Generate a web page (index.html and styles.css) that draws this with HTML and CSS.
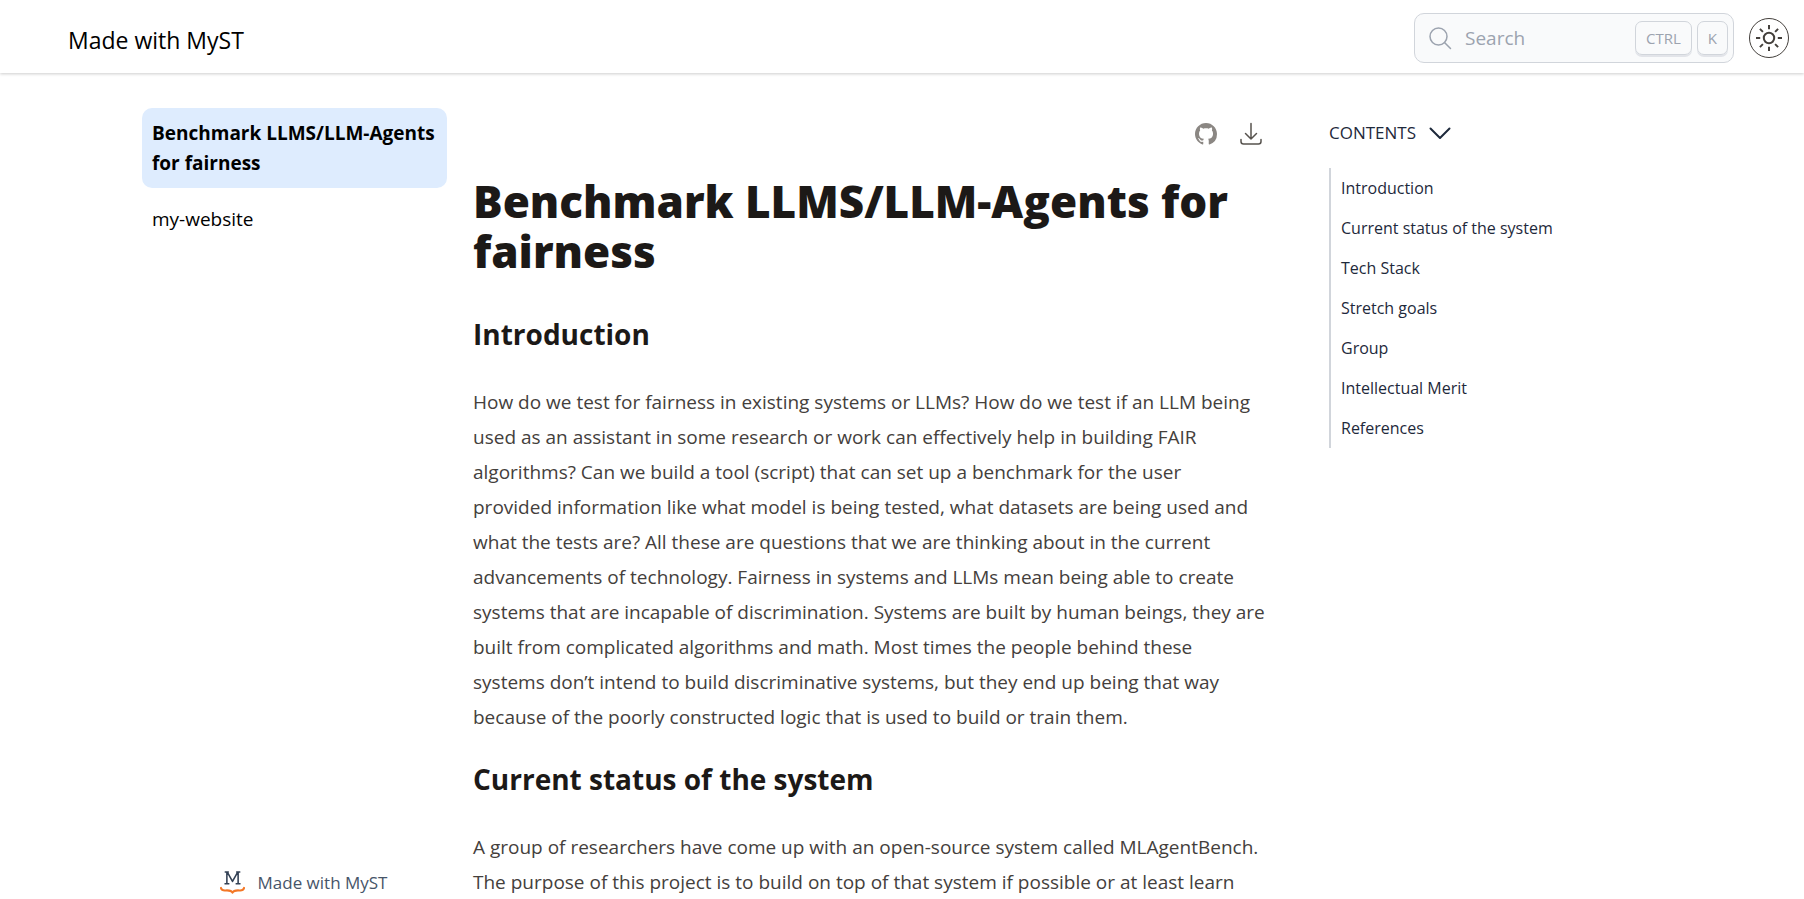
FILE: index.html
```html
<!DOCTYPE html>
<html lang="en">
<head>
<meta charset="utf-8">
<meta name="viewport" content="width=device-width, initial-scale=1">
<title>Benchmark LLMS/LLM-Agents for fairness - Made with MyST</title>
<link rel="stylesheet" href="styles.css">
</head>
<body>
<header class="topbar">
  <a class="site-title" href="#">Made with MyST</a>
  <div class="topbar-actions">
    <button class="search" type="button">
      <svg class="search-icon" viewBox="0 0 24 24" aria-hidden="true"><circle cx="9.500" cy="10.500" r="8.500"/><path d="M15.500 16.500 21.500 22.500"/></svg>
      <span class="search-label">Search</span>
      <kbd class="key">CTRL</kbd>
      <kbd class="key">K</kbd>
    </button>
    <button class="theme-toggle" type="button" aria-label="Toggle theme">
      <svg class="theme-icon" viewBox="0 0 28 28" aria-hidden="true"><circle cx="14" cy="14" r="5.200"/><path d="M14 1v4.200M14 22.800V27M1 14h4.200M22.800 14H27M4.900 4.900l3 3M20.100 20.100l3 3M4.900 23.100l3-3M20.100 7.900l3-3"/></svg>
    </button>
  </div>
</header>
<div class="layout">
  <aside class="sidebar">
    <nav class="site-nav" aria-label="Site">
      <a class="nav-link nav-link-active" href="#" aria-current="page">Benchmark LLMS/LLM-Agents for fairness</a>
      <a class="nav-link" href="#">my-website</a>
    </nav>
    <a class="made-with" href="#">
      <svg class="myst-logo" viewBox="0 0 24 24" aria-hidden="true">
        <path class="logo-letter" d="M4.500 2h4M15.500 2h4M6.600 2v11M17.400 2v11M4.300 13.200h4.700M15 13.200h4.700M7 2l5 9 5-9"/>
        <path class="logo-brace" d="M.9 17.200c.5 2.200 2 2.600 4.500 2.400 3-.2 5.600-.2 6.600 2.200 1-2.400 3.600-2.400 6.600-2.200 2.500.2 4-.2 4.500-2.400"/>
      </svg>
      <span>Made with MyST</span>
    </a>
  </aside>
  <main class="article">
    <div class="article-tools">
      <a class="tool" href="#" aria-label="GitHub repository">
        <svg class="github-icon" viewBox="0 0 16 16" aria-hidden="true"><path d="M8 0C3.580 0 0 3.580 0 8c0 3.540 2.290 6.530 5.470 7.590.4.070.55-.17.55-.38 0-.19-.01-.82-.01-1.490-2.010.37-2.530-.49-2.690-.94-.09-.23-.48-.94-.82-1.130-.28-.15-.68-.52-.01-.53.63-.01 1.080.58 1.230.82.72 1.210 1.870.87 2.330.66.07-.52.28-.87.51-1.070-1.780-.2-3.640-.89-3.640-3.950 0-.87.31-1.590.82-2.150-.08-.2-.36-1.020.08-2.120 0 0 .67-.21 2.200.82.64-.18 1.320-.27 2-.27s1.360.09 2 .27c1.530-1.040 2.200-.82 2.200-.82.44 1.100.16 1.920.08 2.120.51.56.82 1.270.82 2.150 0 3.070-1.870 3.750-3.650 3.950.29.25.54.73.54 1.480 0 1.070-.01 1.930-.01 2.200 0 .21.15.46.55.38A8.010 8.010 0 0 0 16 8c0-4.420-3.580-8-8-8z"/></svg>
      </a>
      <button class="tool" type="button" aria-label="Downloads">
        <svg class="download-icon" viewBox="0 0 24 24" aria-hidden="true"><path d="M12 1.500V17M6.500 11.500 12 17l5.500-5.500M2 17.500v2q0 2.500 2.500 2.500h15q2.500 0 2.500-2.500v-2"/></svg>
      </button>
    </div>
    <h1 class="page-title">Benchmark LLMS/LLM-Agents for fairness</h1>
    <h2 class="section-title" id="introduction">Introduction</h2>
    <p class="prose">How do we test for fairness in existing systems or LLMs? How do we test if an LLM being used as an assistant in some research or work can effectively help in building FAIR algorithms? Can we build a tool (script) that can set up a benchmark for the user<br> provided information like what model is being tested, what datasets are being used and what the tests are? All these are questions that we are thinking about in the current advancements of technology. Fairness in systems and LLMs mean being able to create systems that are incapable of discrimination. Systems are built by human beings, they are built from complicated algorithms and math. Most times the people behind these systems don’t intend to build discriminative systems, but they end up being that way because of the poorly constructed logic that is used to build or train them.</p>
    <h2 class="section-title" id="status">Current status of the system</h2>
    <p class="prose">A group of researchers have come up with an open-source system called MLAgentBench. The purpose of this project is to build on top of that system if possible or at least learn</p>
  </main>
  <nav class="contents" aria-label="Contents">
    <button class="contents-toggle" type="button" aria-expanded="true">
      <span>CONTENTS</span>
      <svg class="chevron" viewBox="0 0 24 24" aria-hidden="true"><path d="M2.500 7.500 12 17l9.500-9.500"/></svg>
    </button>
    <ul class="contents-list">
      <li><a class="contents-link" href="#introduction">Introduction</a></li>
      <li><a class="contents-link" href="#status">Current status of the system</a></li>
      <li><a class="contents-link" href="#">Tech Stack</a></li>
      <li><a class="contents-link" href="#">Stretch goals</a></li>
      <li><a class="contents-link" href="#">Group</a></li>
      <li><a class="contents-link" href="#">Intellectual Merit</a></li>
      <li><a class="contents-link" href="#">References</a></li>
    </ul>
  </nav>
</div>
</body>
</html>
```

FILE: styles.css
```css
* {
  box-sizing: border-box;
}

body {
  margin: 0;
  height: 100vh;
  display: flex;
  flex-direction: column;
  overflow: hidden;
  background: #fff;
  color: #000;
  font-family: "Open Sans", "Noto Sans", sans-serif;
  font-size: 19px;
}

a {
  color: inherit;
  text-decoration: none;
}

button {
  font: inherit;
  color: inherit;
  background: none;
  border: 0;
  padding: 0;
  cursor: pointer;
}

svg {
  display: block;
  flex: none;
  fill: none;
  stroke: currentColor;
  stroke-linecap: round;
  stroke-linejoin: round;
}

.topbar {
  flex: none;
  display: flex;
  align-items: center;
  justify-content: space-between;
  padding: 13px 15px 10px 68px;
  box-shadow: 0 1px 3px rgba(0, 0, 0, 0.2);
}

.site-title {
  padding-top: 4px;
  font-size: 23px;
  line-height: 32px;
}

.topbar-actions {
  display: flex;
  align-items: center;
  gap: 15px;
}

.search {
  display: flex;
  align-items: center;
  gap: 5px;
  width: 320px;
  height: 50px;
  padding: 0 5px 0 14px;
  border: 1px solid #d1d5db;
  border-radius: 10px;
  background: #f9fafb;
  color: #9ca3af;
}

.search-icon {
  width: 24px;
  height: 24px;
  stroke-width: 1.5;
}

.search-label {
  flex: 1;
  padding-left: 7px;
  text-align: left;
}

.key {
  height: 34px;
  padding: 0 10px;
  border: 1px solid #d1d5db;
  border-radius: 7px;
  box-shadow: 0 2px 0 #e2e4e9;
  font-family: inherit;
  font-size: 15px;
  font-weight: 500;
  line-height: 32px;
}

.theme-toggle {
  display: grid;
  place-items: center;
  width: 40px;
  height: 40px;
  border: 1px solid #44403c;
  border-radius: 50%;
  color: #44403c;
}

.theme-icon {
  width: 28px;
  height: 28px;
  stroke-width: 2;
  stroke-linecap: butt;
}

.layout {
  flex: 1;
  min-height: 0;
  width: 100%;
  max-width: 1520px;
  margin: 0 auto;
  display: grid;
  grid-template-columns: 305fr 793fr 370fr;
  column-gap: 26px;
}

.sidebar {
  display: flex;
  flex-direction: column;
  justify-content: space-between;
  padding-top: 35px;
}

.site-nav {
  display: flex;
  flex-direction: column;
  gap: 6px;
}

.nav-link {
  padding: 10px;
  border-radius: 10px;
  line-height: 30px;
}

.nav-link-active {
  background: #deecfe;
  font-weight: 700;
}

.made-with {
  display: flex;
  justify-content: center;
  align-items: center;
  gap: 13px;
  padding: 0 0 5px 18px;
  color: #475569;
  font-size: 17px;
  line-height: 24px;
}

.myst-logo {
  width: 25px;
  height: 25px;
}

.logo-letter {
  stroke: #334155;
  stroke-width: 1.5;
  stroke-linecap: butt;
}

.logo-brace {
  stroke: #f37726;
  stroke-width: 2;
}

.article {
  min-width: 0;
}

.article-tools {
  display: flex;
  justify-content: flex-end;
  gap: 22px;
  padding: 49px 3px 0 0;
}

.github-icon {
  width: 22px;
  height: 24px;
  fill: #8b8783;
  stroke: none;
}

.download-icon {
  width: 24px;
  height: 24px;
  color: #57534e;
  stroke-width: 1.5;
}

.page-title {
  margin: 30px 0 38px;
  color: #1c1917;
  font-size: 44px;
  font-weight: 800;
  line-height: 50px;
}

.section-title {
  margin: 24px 0 31px;
  color: #1c1917;
  font-size: 28px;
  font-weight: 700;
  line-height: 40px;
}

.prose {
  margin: 0;
  color: #44403c;
  line-height: 35px;
}

.contents {
  padding: 45px 0 0 37px;
  color: #1e293b;
  font-size: 17px;
}

.contents-toggle {
  display: flex;
  align-items: center;
  gap: 12px;
  line-height: 30px;
}

.chevron {
  width: 24px;
  height: 24px;
  stroke-width: 2;
}

.contents-list {
  margin: 20px 0 0;
  padding: 0 0 0 10px;
  border-left: 2px solid #d1d5db;
  list-style: none;
}

.contents-link {
  display: block;
  font-size: 16px;
  line-height: 40px;
}
```
